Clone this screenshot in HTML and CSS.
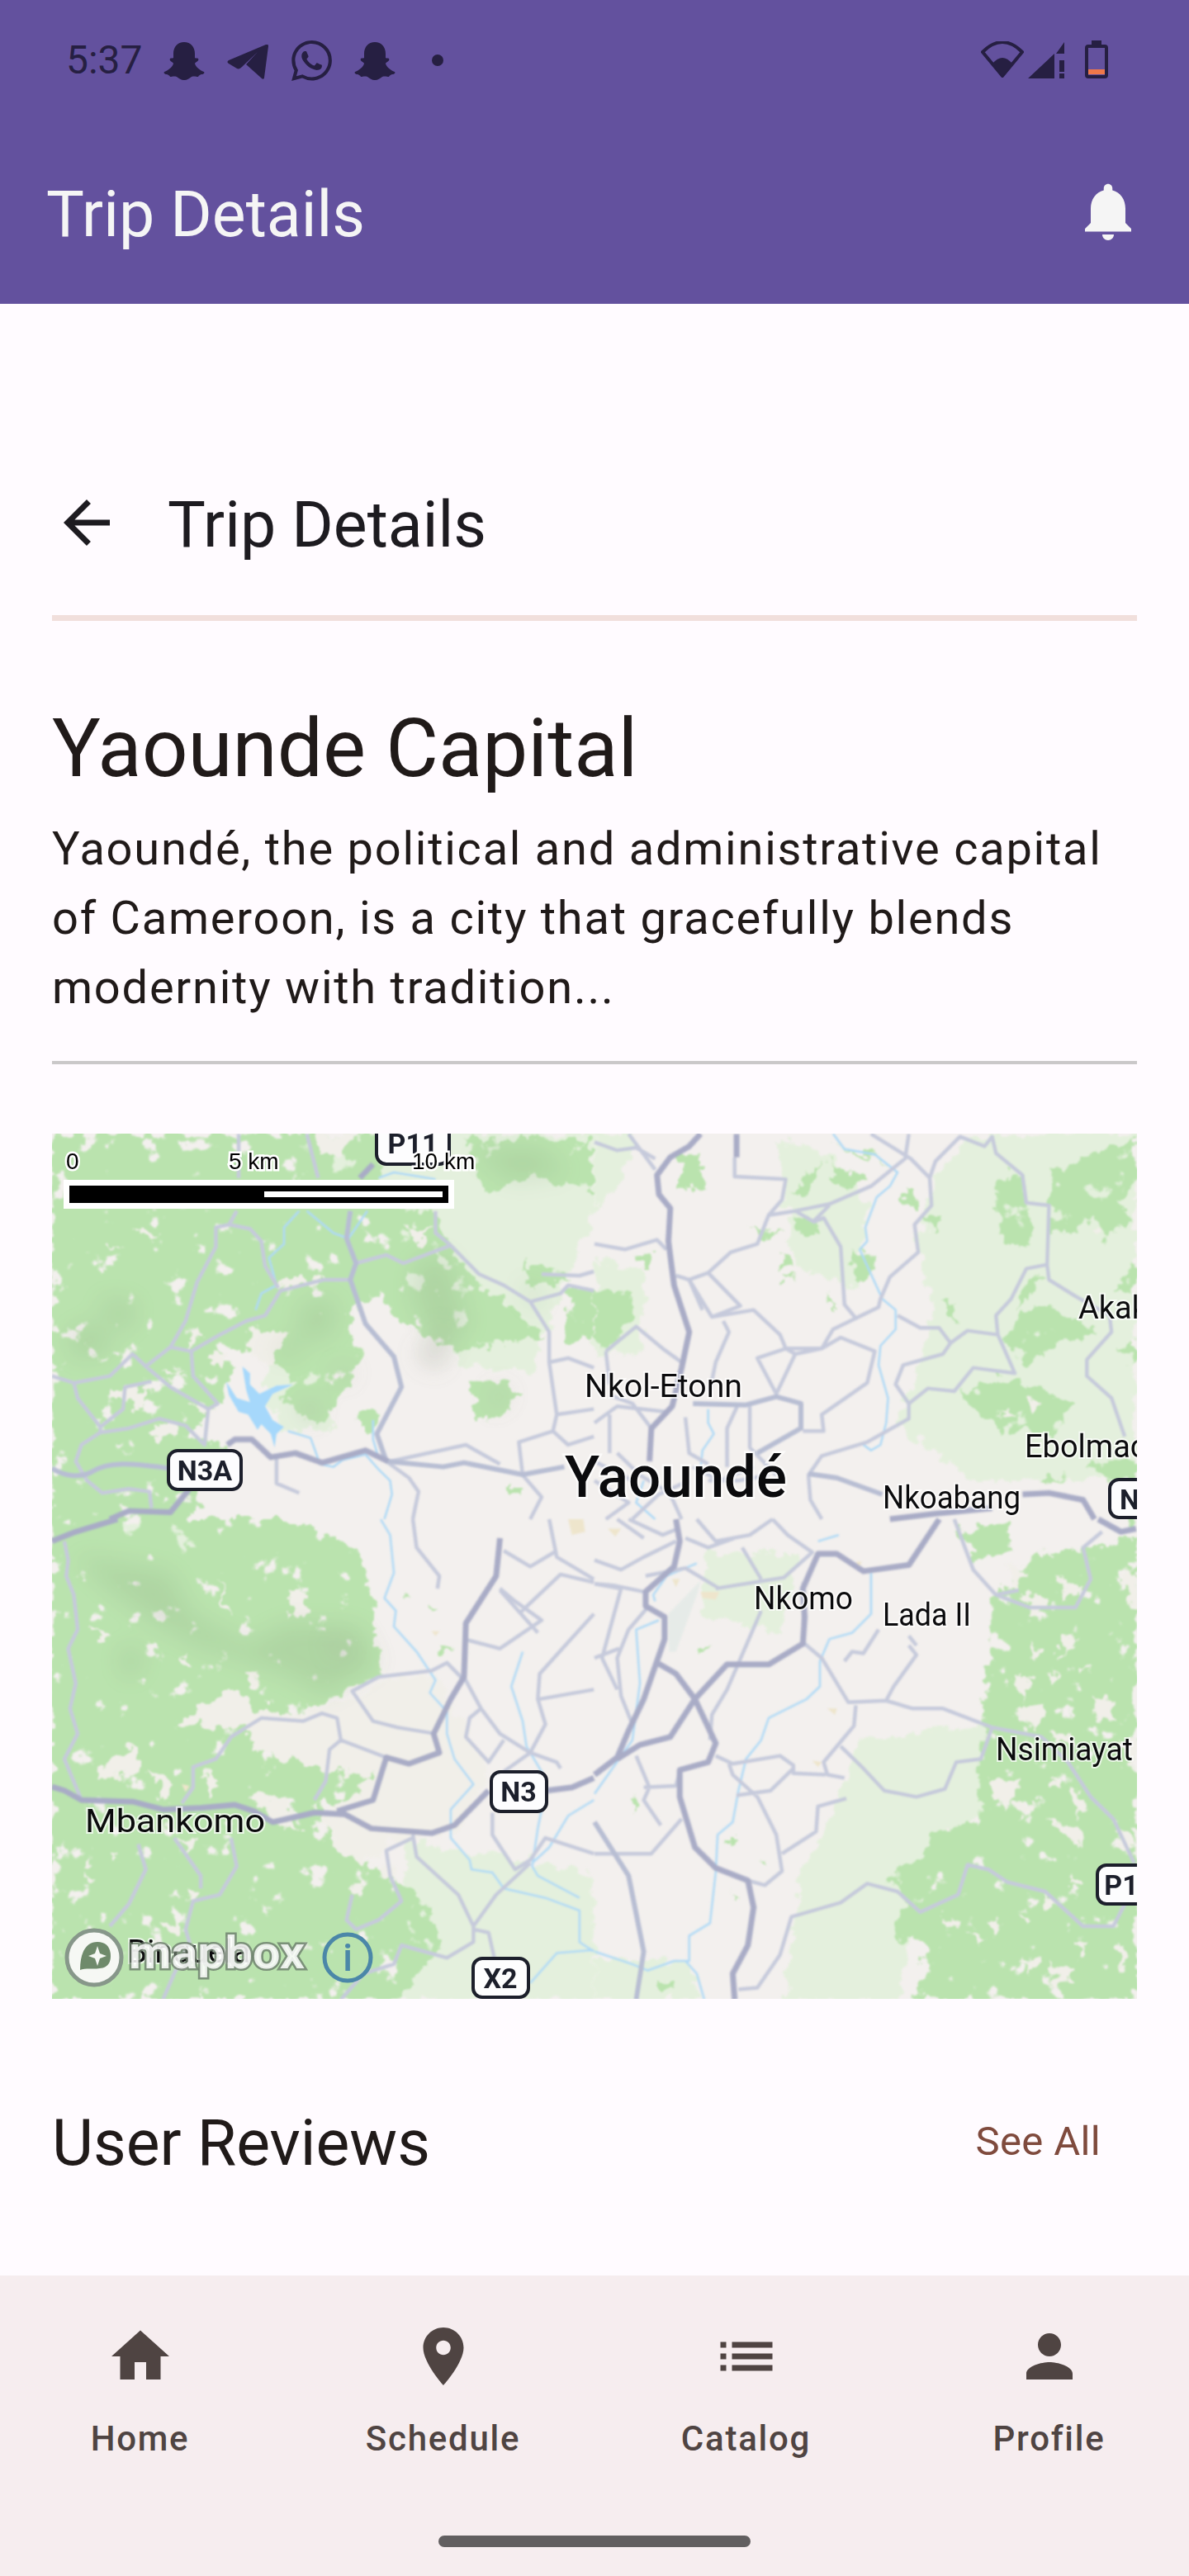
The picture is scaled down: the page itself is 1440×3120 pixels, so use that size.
FILE: index.html
```html
<!DOCTYPE html>
<html lang="en">
<head>
  <meta charset="UTF-8" />
  <meta name="viewport" content="width=device-width, initial-scale=1.0" />
  <title>Trip Details</title>
  <link rel="stylesheet" href="styles.css">
</head>
<body>
  <header class="appbar">
    <div class="statusbar">
      <span class="clock">5:37</span>
      <svg class="ico ghost" viewBox="0 0 50 46"><path d="M25 0c8 0 13 6 13 14v5c1 1 3 0 4 1s0 3-2 4c-1 1-2 1-2 2 1 4 6 8 11 10 1 1 0 3-3 3-2 1-3 1-4 3-2 0-5-1-8 0-3 2-5 4-9 4s-6-2-9-4c-3-1-6 0-8 0-1-2-2-2-4-3-3 0-4-2-3-3 5-2 10-6 11-10 0-1-1-1-2-2-2-1-3-3-2-4s3 0 4-1v-5C12 6 17 0 25 0z"/></svg>
      <svg class="ico plane" viewBox="0 0 50 42"><path d="M47 0c2-1 3 0 3 2l-5 38c0 2-2 2-3 1L23 24 37 9 18 27c-2 2-4 3-6 2L2 23c-2-1-2-3 0-4z"/></svg>
      <svg class="ico whatsapp" viewBox="0 0 24 24"><path d="M17.472 14.382c-.297-.149-1.758-.867-2.03-.967-.273-.099-.471-.148-.67.15-.197.297-.767.966-.94 1.164-.173.199-.347.223-.644.075-.297-.15-1.255-.463-2.39-1.475-.883-.788-1.48-1.761-1.653-2.059-.173-.297-.018-.458.13-.606.134-.133.298-.347.446-.52.149-.174.198-.298.298-.497.099-.198.05-.371-.025-.52-.075-.149-.669-1.612-.916-2.207-.242-.579-.487-.5-.669-.51-.173-.008-.371-.01-.57-.01-.198 0-.52.074-.792.372-.272.297-1.04 1.016-1.04 2.479 0 1.462 1.065 2.875 1.213 3.074.149.198 2.096 3.2 5.077 4.487.709.306 1.262.489 1.694.625.712.227 1.36.195 1.871.118.571-.085 1.758-.719 2.006-1.413.248-.694.248-1.289.173-1.413-.074-.124-.272-.198-.57-.347m-5.421 7.403h-.004a9.87 9.87 0 01-5.031-1.378l-.361-.214-3.741.982.998-3.648-.235-.374a9.86 9.86 0 01-1.51-5.26c.001-5.45 4.436-9.884 9.888-9.884 2.64 0 5.122 1.03 6.988 2.898a9.825 9.825 0 012.893 6.994c-.003 5.45-4.437 9.884-9.885 9.884m8.413-18.297A11.815 11.815 0 0012.05 0C5.495 0 .16 5.335.157 11.892c0 2.096.547 4.142 1.588 5.945L.057 24l6.305-1.654a11.882 11.882 0 005.683 1.448h.005c6.554 0 11.89-5.335 11.893-11.893a11.821 11.821 0 00-3.48-8.413z"/></svg>
      <svg class="ico ghost" viewBox="0 0 50 46"><path d="M25 0c8 0 13 6 13 14v5c1 1 3 0 4 1s0 3-2 4c-1 1-2 1-2 2 1 4 6 8 11 10 1 1 0 3-3 3-2 1-3 1-4 3-2 0-5-1-8 0-3 2-5 4-9 4s-6-2-9-4c-3-1-6 0-8 0-1-2-2-2-4-3-3 0-4-2-3-3 5-2 10-6 11-10 0-1-1-1-2-2-2-1-3-3-2-4s3 0 4-1v-5C12 6 17 0 25 0z"/></svg>
      <span class="dot"></span>
      <div class="sysicons">
        <svg class="ico wifi" viewBox="0 0 52 45"><path class="wifi-line" d="M2 13Q26-11 50 13L26 42Z"/><path d="M14 27Q26 13 38 27L26 43Z"/></svg>
        <svg class="ico signal" viewBox="0 0 45 44"><path d="M0 44H32V14ZM44 0V14H34ZM38 22H44V36H38ZM38 38H44V44H38Z"/></svg>
        <svg class="ico battery" viewBox="0 0 28 46"><path d="M8 0H20V5H8Z"/><rect class="batt-body" x="2" y="7" width="24" height="37" rx="2"/><rect class="batt-level" x="4" y="35" width="20" height="6"/></svg>
      </div>
    </div>
    <div class="appbar-row">
      <span class="appbar-title">Trip Details</span>
      <svg class="icon-84 bell" viewBox="0 0 24 24"><path d="M12 22c1.1 0 2-.9 2-2h-4c0 1.1.89 2 2 2zm6-6v-5c0-3.07-1.64-5.64-4.5-6.32V4c0-.83-.67-1.5-1.5-1.5s-1.5.67-1.5 1.5v.68C7.63 5.36 6 7.92 6 11v5l-2 2v1h16v-1l-2-2z"/></svg>
    </div>
  </header>

  <main class="content">
    <div class="page-head">
      <svg class="icon-84 back" viewBox="0 0 24 24"><path d="M20 11H7.83l5.59-5.59L12 4l-8 8 8 8 1.41-1.41L7.83 13H20v-2z"/></svg>
      <span class="page-title">Trip Details</span>
    </div>
    <div class="rule-pink"></div>
    <h1 class="place">Yaounde Capital</h1>
    <p class="blurb">Yaoundé, the political and administrative capital of Cameroon, is a city that gracefully blends modernity with tradition...</p>
    <div class="rule-grey"></div>

    <svg class="map" viewBox="63 1373 1314 1048" preserveAspectRatio="none">
      <defs>
        <filter id="rough" filterUnits="userSpaceOnUse" x="0" y="1340" width="1440" height="1120">
          <feTurbulence type="fractalNoise" baseFrequency="0.06" numOctaves="3" seed="7"/>
          <feDisplacementMap in="SourceGraphic" scale="26" xChannelSelector="R" yChannelSelector="G"/>
        </filter>
        <filter id="mottle" filterUnits="userSpaceOnUse" x="0" y="1340" width="1440" height="1120">
          <feTurbulence type="fractalNoise" baseFrequency="0.06" numOctaves="3" seed="7" result="warp"/>
          <feDisplacementMap in="SourceGraphic" in2="warp" scale="26" xChannelSelector="R" yChannelSelector="G" result="shape"/>
          <feTurbulence type="fractalNoise" baseFrequency="0.035" numOctaves="4" seed="21"/>
          <feColorMatrix values="0 0 0 0 0  0 0 0 0 0  0 0 0 0 0  14 0 0 0 -3.7"/>
          <feComposite in="shape" operator="in"/>
        </filter>
        <filter id="soft" filterUnits="userSpaceOnUse" x="0" y="1340" width="1440" height="1120">
          <feGaussianBlur stdDeviation="14"/>
        </filter>
        <filter id="ease" filterUnits="userSpaceOnUse" x="0" y="1340" width="1440" height="1120">
          <feGaussianBlur stdDeviation="0.8"/>
        </filter>
      </defs>

      <rect class="land" x="63" y="1373" width="1314" height="1048"/>

      <g filter="url(#ease)">
      <!-- pale vegetation -->
      <g class="wash" filter="url(#rough)">
        <path transform="translate(0 1360) scale(.4587 .3333)" d="M800 40L1568 40 1568 320 1400 900 1220 880 1090 640 1000 340 780 300ZM700 760L860 800 820 1100 700 1040ZM720 980L860 960 880 1120 740 1120Z"/>
        <path transform="translate(720 1360) scale(.4587 .3333)" d="M1000 40L1430 40 1430 1300 1000 1300 800 1100 900 700 850 450 900 200ZM480 60L640 130 720 300 700 600 530 520ZM0 40L120 40 60 240 0 300ZM0 500L130 540 130 820 0 860Z"/>
        <path transform="translate(0 1840) scale(.4587 .3822)" d="M180 100L300 20 520 10 630 140 510 180 490 110 300 60ZM1080 1020L1568 1120 1568 1523 1040 1523ZM137 550L170 550 165 800 137 820Z"/>
        <path transform="translate(720 1840) scale(.4587 .3822)" d="M500 1523L550 1100 600 1000 700 700 1050 650 1050 900 870 1100 800 1523ZM0 1523L0 1400 250 1400 280 1523ZM300 110L540 110 490 360 280 300Z"/>
      </g>

      <!-- forest, whole masses with clearings eaten out of them -->
      <g class="forest" filter="url(#mottle)">
        <path transform="translate(0 1360) scale(.4587 .3333)" d="M137 40L1000 40 1010 300 1140 320 1190 450 1260 600 1320 640 1450 780 1320 800 1230 830 1150 800 1030 700 1000 600 920 700 930 800 970 830 890 1020 830 1100 740 1000 780 930 660 820 560 850 620 880 580 1020 500 1130 600 1180 500 1440 137 1440ZM1230 60L1560 60 1568 250 1400 200 1280 250ZM1380 500L1520 560 1400 600ZM1490 600L1568 600 1568 800 1500 790Z"/>
        <path transform="translate(0 1840) scale(.4587 .3822)" d="M137 0L760 0 960 100 1010 490 800 610 900 800 990 760 1000 850 880 920 830 900 900 1020 1000 1120 1100 1180 1170 1340 1050 1523 137 1523Z"/>
        <path transform="translate(720 1840) scale(.4587 .3822)" d="M1430 60L1150 120 1050 250 1040 500 1010 830 1020 960 880 1000 870 1080 780 1130 820 1230 780 1320 860 1340 880 1400 840 1523 1430 1523Z"/>
        <path transform="translate(720 1360) scale(.4587 .3333)" d="M1060 250L1080 190 1130 190 1140 290 1165 400 1130 450 1080 420 1060 340ZM1210 170L1430 60 1430 230 1340 340 1200 420ZM1290 280L1350 260 1430 350 1350 420ZM1090 760L1140 680 1210 660 1320 770 1220 800 1140 890 1100 840ZM960 980L1100 920 1180 970 1280 1015 1210 1130 1080 1120 1020 1060ZM1430 500L1370 610 1430 620Z"/>
      </g>

      <!-- smaller solid patches -->
      <g class="forest" filter="url(#rough)">
        <path transform="translate(0 1360) scale(.4587 .3333)" d="M1240 950L1350 950 1370 1000 1290 1090 1250 1050ZM940 1060L990 1050 985 1130 960 1110ZM1340 1310L1380 1330 1350 1360Z"/>
        <path transform="translate(720 1360) scale(.4587 .3333)" d="M0 600L100 620 105 720 30 820 0 780ZM1380 810L1430 800 1430 880ZM640 70L780 150 700 120ZM520 260L600 140 560 260ZM620 140L720 200 680 240 640 230ZM220 120L270 110 300 230 230 240ZM400 380L490 400 460 430ZM520 340L600 370 600 410 540 400ZM490 480L520 510 490 530ZM495 550L525 575 500 570ZM680 460L740 480 720 570 690 580ZM910 640L960 680 950 720ZM620 620L640 680 620 660ZM115 480L155 480 150 530 125 530ZM815 250L860 280 850 305 820 280ZM1300 1250L1430 1220 1430 1290 1360 1300ZM870 340L920 350 900 390ZM1190 1280L1240 1290 1170 1310ZM1140 560L1190 560 1120 680Z"/>
        <path transform="translate(0 1840) scale(.4587 .3822)" d="M1060 240L1080 250 1070 260ZM1130 260L1150 270 1140 280ZM1150 410L1200 410 1170 430Z"/>
        <path transform="translate(720 1840) scale(.4587 .3822)" d="M960 40L1100 0 1090 100 1010 130ZM1380 0L1430 0 1430 30ZM160 1470L215 1460 210 1495 170 1495ZM350 1010L375 1010 355 1035ZM270 410L300 410 275 430ZM445 1080L455 1100 430 1100ZM370 1170L385 1190 375 1195ZM100 890L115 900 100 930Z"/>
      </g>

      <!-- clearings -->
      <g class="clearing" filter="url(#rough)">
        <path transform="translate(0 1360) scale(.4587 .3333)" d="M660 760L760 760 720 880 660 850ZM560 830L610 850 590 890 560 860ZM340 390L430 400 400 420ZM280 450L325 445 290 460ZM790 550L850 570 770 600 720 590ZM430 890L480 905 450 910ZM520 740L530 790 495 820ZM500 1020L580 1030 550 1060ZM290 960L390 970 370 1040 320 1010ZM410 1090L470 1100 460 1160 400 1130ZM1060 380L1140 400 1110 440ZM830 40L930 40 900 120 850 110Z"/>
        <path transform="translate(0 1840) scale(.4587 .3822)" d="M470 650L520 600 620 540 680 600 780 620 930 560 1050 500 1150 500 1300 800 1200 1000 1100 1010 1000 1040 960 1100 880 1040 900 1000 830 930 880 920 990 810 860 800 680 730 640 660ZM300 740L370 720 360 800 250 830ZM390 790L470 830 440 890ZM540 800L580 840 560 880ZM660 870L760 890 800 990 720 960ZM235 350L290 350 280 385ZM490 440L505 480 485 470ZM580 175L610 320 590 280ZM760 210L810 240 830 310 770 310ZM650 490L690 510 670 530ZM230 1060L240 1090 220 1090ZM230 1110L245 1140 230 1140ZM420 1280L480 1270 470 1320ZM500 1170L530 1190 500 1210ZM920 1140L970 1170 950 1200ZM1000 1100L1040 1110 1020 1150ZM480 1000L530 1020 500 1060ZM300 1060L320 1080 300 1090Z"/>
        <path transform="translate(720 1840) scale(.4587 .3822)" d="M1090 150L1150 170 1100 220ZM1220 190L1280 220 1250 260ZM1130 240L1190 260 1160 310ZM1150 400L1180 420 1160 440ZM1210 470L1230 510 1200 530ZM1290 460L1310 470 1290 480ZM1100 500L1160 490 1130 570ZM1320 560L1370 580 1380 640 1330 640ZM1130 580L1180 600 1170 660 1120 640ZM1200 690L1250 670 1280 720ZM1380 700L1430 700 1430 780ZM1040 830L1130 830 1080 920ZM1100 890L1160 900 1130 950ZM1210 820L1225 850 1210 860ZM1200 950L1270 970 1280 1040ZM1250 840L1300 880 1280 950ZM1370 960L1410 1000 1430 1050 1390 1040ZM930 970L945 1000 930 1000ZM920 1260L965 1260 960 1300 930 1290ZM1040 1280L1075 1270 1060 1330ZM990 1310L1030 1320 1020 1340ZM1120 1250L1150 1270 1130 1280ZM1190 1190L1215 1240 1180 1240ZM1260 1120L1285 1160 1270 1170ZM1380 1340L1420 1400 1390 1420ZM1200 1410L1270 1430 1260 1470 1220 1470ZM1400 160L1430 180 1430 280 1410 270ZM1240 360L1280 380 1230 440ZM1130 1380L1170 1390 1150 1440ZM1270 1340L1300 1350 1280 1380Z"/>
        <path transform="translate(720 1360) scale(.4587 .3333)" d="M1310 380L1345 400 1320 420ZM1140 1000L1180 1020 1150 1050ZM1060 1040L1110 1060 1080 1070Z"/>
      </g>

      <!-- town patches -->
      <path class="urban" transform="translate(720 1840) scale(.4587 .3822)" d="M35 30L70 30 55 55ZM280 230L330 230 320 255 285 250ZM615 600L640 600 635 620ZM575 765L600 770 590 785ZM205 190L225 190 215 215ZM690 135L705 135 700 150Z"/>
      <path class="urban" transform="translate(0 1840) scale(.4587 .3822)" d="M1500 0L1540 0 1545 40 1510 50ZM480 840L500 845 490 865ZM1140 355L1160 355 1150 370Z"/>
      <path class="strip" transform="translate(720 1840) scale(.4587 .3822)" d="M195 300L280 195 272 235 215 420 197 420Z"/>

      <!-- hillshade -->
      <g class="shade" filter="url(#soft)">
        <path transform="translate(0 1360) scale(.4587 .3333)" d="M180 760L260 720 300 820 200 860ZM260 640L360 650 340 760 290 730ZM1100 500L1180 480 1240 740 1160 800 1090 650ZM1250 100L1420 90 1500 180 1350 210ZM800 660L880 640 880 760 790 800ZM700 820L800 790 780 860ZM1130 780L1180 760 1190 840 1130 860ZM1380 560L1440 640 1400 680Z"/>
        <path transform="translate(0 1840) scale(.4587 .3822)" d="M200 120L450 170 500 300 650 400 760 330 950 340 1000 460 860 560 760 490 660 450 520 400 400 320 290 220ZM320 400L380 420 360 500 320 490Z"/>
      </g>
      <g class="greyhill" filter="url(#soft)">
        <path transform="translate(0 1360) scale(.4587 .3333)" d="M800 1000L850 1020 830 1090 790 1060ZM1110 800L1180 830 1160 900 1100 860ZM1300 950L1350 980 1300 1060ZM880 880L940 900 900 950ZM1150 720L1190 770 1160 810Z"/>
        <path transform="translate(0 1840) scale(.4587 .3822)" d="M860 370L930 410 880 440Z"/>
      </g>

      <!-- water -->
      <path class="lake" transform="translate(0 1360) scale(.4587 .3333)" d="M640 885L660 910 660 950 685 985 730 955 775 950 720 985 700 1030 720 1080 750 1105 730 1130 725 1180 715 1130 690 1095 680 1115 655 1060 630 1050 605 990 597 940 625 1000 660 1015 650 970Z"/>
      <g class="stream">
        <path transform="translate(0 1360) scale(.4587 .3333)" d="M790 320L750 380 750 440 710 490 730 590 690 620 675 680M810 320L880 400 920 420 970 320M1000 200L1040 180 1150 205M760 1120L820 1145 845 1240 880 1250 905 1225 965 1205 1000 1260 1030 1300 1035 1350 1015 1440M985 1080L985 1150 1000 1220"/>
        <path transform="translate(720 1360) scale(.4587 .3333)" d="M630 40L660 95 740 115 800 180 780 230 745 270 715 380 720 430 700 460 740 580 760 640 795 680 795 750 755 810 750 880 775 1000 770 1090 755 1170 730 1190 705 1165M300 1040L300 1090 315 1130 285 1190 280 1260M130 1300L110 1380 160 1440"/>
        <path transform="translate(0 1840) scale(.4587 .3822)" d="M1005 0L1030 50 1040 170 1015 250 1045 290 1040 340 1100 420 1150 510 1135 550 1180 610 1180 680 1200 760 1250 840 1190 920 1190 1010 1240 1080 1245 1110 1300 1120 1330 1170 1440 1200 1530 1240 1530 1340 1568 1370M1380 420L1350 530 1380 640 1390 720 1430 800 1440 860 1420 980 1405 1100 1420 1130 1530 1200M1568 890L1500 940 1450 1040 1405 1090M1568 1365L1470 1375 1400 1470"/>
        <path transform="translate(720 1840) scale(.4587 .3822)" d="M645 50L590 70M730 170L730 300 680 360 620 380 595 450 595 530 560 570 460 630 440 700 400 760 380 860 365 960 325 1000 320 1120 305 1280 250 1320 250 1400 210 1400 140 1430 100 1410 0 1370M240 1400L270 1440 290 1523M160 260L155 240 190 180 270 140M170 320L110 350 120 520 100 700 0 870"/>
      </g>

      <!-- minor roads -->
      <g class="road">
        <path transform="translate(0 1360) scale(.4587 .3333)" d="M940 510L1020 480 1065 510 1190 445 1265 550 1330 590 1400 650 1450 760 1450 870 1500 855 1568 890M920 570L855 570 740 610 700 700 650 720 580 770 505 830 450 815 385 885 350 840 290 920 195 945 137 920M625 320L605 370 570 380 570 450 520 580 490 720 450 815M605 370L660 385 690 430 700 520 735 600M505 830L510 920 575 1020 550 1040 450 960 385 885M195 945L205 1000 265 1105 325 1040 330 960 400 940M265 1105L265 1125 215 1170 200 1230 230 1300 270 1345 340 1330 395 1340 400 1400M265 1125L340 1110 420 1075 490 1100 540 1170 550 1040M1450 870L1470 1060 1460 1120 1370 1160 1380 1280 1430 1360 1400 1440M1470 1060L1568 1040M1460 1120L1500 1170 1568 1140M730 1215L730 1310 790 1345M1030 1230L1230 1170 1320 1240M1020 1230L1080 1290 1105 1340 1090 1440M1150 320L1150 400 1190 445M810 40L840 200M630 40L630 200M1430 550L1530 555 1568 540M1400 650L1480 620 1500 590 1568 610"/>
        <path transform="translate(720 1360) scale(.4587 .3333)" d="M370 125L370 195 505 205 495 280 460 335 530 320 620 295 730 230 820 130 830 40M460 335L430 440 360 470 300 545 250 570 215 555M0 440L80 460 165 425 190 460M300 545L385 665 310 705 250 570 285 680M310 705L420 680 490 770 505 820 430 855 480 985 530 840 505 820M530 320L580 360 605 345 650 450 660 660 690 710 750 670 755 640 780 560 855 470 845 370 890 300 885 200 835 130 730 40M620 300L580 355M505 820L600 820 650 780 740 830 720 945 600 1060 605 1120 550 1120M530 840L600 820 630 750 750 670M800 700L860 745 910 745 940 800 985 755 1065 770 1110 910 1000 890 950 975 880 965 830 1020 795 950 815 880 920 840 940 800M1065 770L1060 700 1100 640 1140 530 1195 515 1200 300 1140 290 1130 190 1060 110 1050 50 1030 85 965 50 900 140 885 200M1195 515L1200 570 1270 630 1360 700 1365 760 1300 860 1300 920 1365 1000 1400 1140M830 1020L830 1075 720 1160 600 1210 565 1280 570 1370 600 1440M150 1110L100 1020 40 990M240 1070L250 1200 300 1240M380 1020L350 1110 350 1250M410 1030L410 1180 480 1280M30 830L110 740 180 820 230 870M0 1090L60 1030 190 1050M40 1060L40 1200M30 830L40 950M340 720L355 760 320 870 305 970M0 70L60 100 110 90 160 130M90 40L160 170M260 1250L330 1300 420 1250M0 1300L90 1380 30 1440M60 1200L120 1280 205 1350M100 1440L170 1350 250 1300M300 1300L380 1300 460 1280M200 1350L230 1440M0 1230L100 1300"/>
        <path transform="translate(0 1840) scale(.4587 .3822)" d="M170 70L180 130 175 180 195 240 205 350 180 410 200 520 185 600 205 680 170 760 215 890M1090 0L1100 90 1160 180 1155 220M1150 680L1050 660 985 640 930 545 1000 500 1140 480 1180 455 1225 510M1020 755L900 700 870 730 860 830 830 890M900 700L890 630 850 615 800 640 690 630 610 690 570 760 510 785 510 850 480 900M1225 380L1320 410 1430 320 1360 260 1320 220M1225 500L1270 600 1240 630 1230 690 1290 770 1330 700M1270 600L1320 680 1400 740 1440 650 1420 570 1425 490 1500 390 1568 300M1400 740L1330 800M1425 570L1568 540M1400 740L1470 770 1480 790M1300 930L1300 1000 1360 1110 1400 1080 1440 1010 1568 1060M1090 1000L1100 1070 1210 1190 1250 1290 1250 1340 1180 1390 1060 1350 1040 1410 960 1440 900 1523M1090 1010L1020 1050 1030 1130 1060 1210 1000 1270 940 1300 915 1270 930 1190M1250 1290L1310 1190 1400 1090M1250 1300L1290 1310 1305 1390M610 1010L625 1100 580 1190 510 1210 490 1300 500 1340 460 1440 430 1523M460 1010L530 1130 530 1170M365 1030L385 1110 340 1220 290 1290M1370 300L1480 175 1568 200M1320 225L1420 360M1450 0L1470 120 1568 190M1330 100L1400 150 1470 100"/>
        <path transform="translate(720 1840) scale(.4587 .3822)" d="M550 390L600 440 670 580 770 575 840 600 920 600 1050 660 1180 690 1250 770 1310 880 1370 950 1425 1090M690 590L685 655 605 770 615 810 660 820M650 720L710 790 765 860 850 880 925 855 955 770 1020 760 1050 660M320 750L365 775 490 750 525 780 525 805 610 810M355 775L365 810 430 880 480 1000 495 1115 450 1160 405 1145M525 790L465 860 375 875M495 1060L585 990 590 910 665 885M0 1060L150 1060 230 950M130 850L215 845 225 800M110 750L145 850 130 890 175 970M320 220L500 185 575 105 510 50 470 0M135 180L240 155 330 220M0 205L70 220 20 440 60 540M390 90L440 190M440 290L350 540 310 620 305 700M0 440L65 410M380 1490L430 1485 490 1380 520 1260 650 1215 720 1155 800 1180 860 1245 960 1190 985 1095 1040 1110 1090 1150 1190 1180 1290 1290 1370 1290 1400 1220M950 0L1000 160 1060 240 1150 280 1270 280 1310 190 1290 90 1340 40M1060 240L1120 225M830 400L850 430 790 530 770 575M660 450L680 420 710 425 750 350M830 370L850 400M0 130L70 160 130 120 215 70M0 205L50 210 130 230M140 280L90 350 60 440 70 560 100 650M90 0L180 50 220 30M270 0L320 70 410 50 470 0M240 60L300 90 370 60M130 60L60 0"/>
      </g>

      <!-- main roads -->
      <g class="road road-mid">
        <path transform="translate(0 1360) scale(.4587 .3333)" d="M925 320L915 420 940 510 925 570 965 730 1040 850 1060 960 995 1130 1020 1230M137 1255C170 1285 210 1290 240 1270 290 1225 360 1240 445 1255M1025 1230L1170 1250 1225 1235 1380 1278 1490 1250"/>
        <path transform="translate(720 1360) scale(.4587 .3333)" d="M260 1020L400 1025 480 995 545 1020 545 1110 430 1200M565 1275L640 1290 760 1350"/>
        <path transform="translate(720 1840) scale(.4587 .3822)" d="M0 960L90 1130 130 1370 110 1523"/>
      </g>
      <g class="road road-main">
        <path transform="translate(0 1360) scale(.4587 .3333)" d="M600 1170L620 1150 665 1150 715 1215 780 1200 850 1235 965 1190 1025 1230M500 1330L450 1415 340 1410 290 1440M950 200L985 150"/>
        <path transform="translate(720 1360) scale(.4587 .3333)" d="M280 40L250 85 200 125 165 190 170 260 200 310 195 430 210 590 250 760 230 890 205 1030 150 1110 145 1230M375 40L375 125M1130 1350L1200 1345 1290 1370 1320 1440M780 1440L900 1420 1050 1400"/>
        <path transform="translate(0 1840) scale(.4587 .3822)" d="M137 70L200 40 310 0M137 848L170 860 215 890 350 895 430 920 530 915 620 905 670 925 720 960 830 930 910 935 980 980 1140 995 1200 970 1290 860M1445 860L1510 850 1568 820M1320 60L1310 180 1230 330 1225 500 1190 570 1145 680 1160 740 1080 775 1020 755 985 890 890 925"/>
        <path transform="translate(720 1840) scale(.4587 .3822)" d="M215 0L225 70 210 150 135 230 135 275 185 310 185 380 130 570 90 670 60 755 0 810M60 760L120 715 200 690 265 570 350 460 460 460 550 395 555 310 550 220 590 110 640 110 710 165 830 145 910 0M165 455L215 490 265 570 320 710 300 770 225 795 225 880 265 1040 320 1105 405 1145 420 1230 405 1350 365 1440 370 1523M1330 0L1390 40 1430 30"/>
      </g>
      </g>

      <!-- road shields -->
      <g class="shield">
        <rect x="456" y="1350" width="88" height="60" rx="12"/>
        <rect x="204" y="1757" width="88" height="47" rx="11"/>
        <rect x="595" y="2146" width="67" height="48" rx="11"/>
        <rect x="573" y="2372" width="67" height="47" rx="11"/>
        <rect x="1344" y="1792" width="80" height="46" rx="11"/>
        <rect x="1329" y="2259" width="80" height="47" rx="11"/>
      </g>
      <g class="shield-text">
        <text x="500" y="1397">P11</text>
        <text x="248" y="1793">N3A</text>
        <text x="628" y="2182">N3</text>
        <text x="606" y="2408">X2</text>
        <text x="1368" y="1828">N</text>
        <text x="1358" y="2295">P1</text>
      </g>

      <!-- place labels -->
      <g class="label">
        <text x="708" y="1692" textLength="191" lengthAdjust="spacingAndGlyphs">Nkol-Etonn</text>
        <text x="1069" y="1827" textLength="167" lengthAdjust="spacingAndGlyphs">Nkoabang</text>
        <text x="1241" y="1765">Ebolmac</text>
        <text x="1306" y="1597">Akak</text>
        <text x="913" y="1949" textLength="120" lengthAdjust="spacingAndGlyphs">Nkomo</text>
        <text x="1069" y="1969" textLength="107" lengthAdjust="spacingAndGlyphs">Lada II</text>
        <text x="1206" y="2132" textLength="166" lengthAdjust="spacingAndGlyphs">Nsimiayat</text>
        <text x="103" y="2219" textLength="218" lengthAdjust="spacingAndGlyphs">Mbankomo</text>
        <text x="154" y="2377" textLength="149" lengthAdjust="spacingAndGlyphs">Binguela</text>
        <text class="capital" x="684" y="1813" textLength="269" lengthAdjust="spacingAndGlyphs">Yaoundé</text>
      </g>

      <!-- scale bar -->
      <rect class="scale-back" x="77" y="1429" width="473" height="35"/>
      <rect class="scale-ink" x="84" y="1436" width="459" height="21"/>
      <rect class="scale-back" x="320" y="1443" width="216" height="7"/>
      <g class="scale-text">
        <text x="80" y="1416">0</text>
        <text x="277" y="1416">5 km</text>
        <text x="499" y="1416">10 km</text>
      </g>

      <!-- attribution -->
      <circle class="mb-ring" cx="114" cy="2371" r="33"/>
      <path class="mb-leaf" d="M134 2369C134 2358 128 2352 118 2352 106 2352 97 2362 97 2386 108 2381 134 2392 134 2369Z"/>
      <path class="mb-star" d="M118 2357L121 2366 129 2369 121 2372 118 2381 115 2372 107 2369 115 2366Z"/>
      <text class="mb-word" x="156" y="2384" textLength="213" lengthAdjust="spacingAndGlyphs">mapbox</text>
      <circle class="mb-info" cx="421" cy="2371" r="28"/>
      <text class="mb-i" x="421" y="2387">i</text>
    </svg>

    <div class="reviews-head">
      <h2 class="reviews-title">User Reviews</h2>
      <a class="see-all">See All</a>
    </div>
  </main>

  <nav class="tabbar">
    <div class="tab">
      <svg class="icon-84" viewBox="0 0 24 24"><path d="M10 20v-6h4v6h5v-8h3L12 3 2 12h3v8z"/></svg>
      <span>Home</span>
    </div>
    <div class="tab">
      <svg class="icon-84" viewBox="0 0 24 24"><path d="M12 2C8.13 2 5 5.13 5 9c0 5.25 7 13 7 13s7-7.75 7-13c0-3.87-3.13-7-7-7zm0 9.5c-1.38 0-2.5-1.12-2.5-2.5s1.12-2.5 2.5-2.5 2.5 1.12 2.5 2.5-1.12 2.5-2.5 2.5z"/></svg>
      <span>Schedule</span>
    </div>
    <div class="tab">
      <svg class="icon-84" viewBox="0 0 24 24"><path d="M3 13h2v-2H3v2zm0 4h2v-2H3v2zm0-8h2V7H3v2zm4 4h14v-2H7v2zm0 4h14v-2H7v2zM7 7v2h14V7H7z"/></svg>
      <span>Catalog</span>
    </div>
    <div class="tab">
      <svg class="icon-84" viewBox="0 0 24 24"><path d="M12 12c2.21 0 4-1.79 4-4s-1.79-4-4-4-4 1.79-4 4 1.79 4 4 4zm0 2c-2.67 0-8 1.34-8 4v2h16v-2c0-2.66-5.33-4-8-4z"/></svg>
      <span>Profile</span>
    </div>
    <div class="home-pill"></div>
  </nav>
</body>
</html>
```

FILE: styles.css
```css
* {
  box-sizing: border-box;
}
body {
  margin: 0;
  width: 1440px;
  height: 3120px;
  overflow: hidden;
  display: flex;
  flex-direction: column;
  background-color: #fffbff;
  font-family: Roboto, sans-serif;
  color: #201a19;
}
svg {
  display: block;
  flex: none;
}
.appbar {
  height: 368px;
  background-color: #63519e;
  flex: none;
}
.statusbar {
  height: 147px;
  padding: 49px 98px 0 80px;
  display: flex;
  align-items: flex-start;
  color: #261f42;
}
.clock {
  font-size: 48px;
  line-height: 48px;
  width: 118px;
}
.ico {
  fill: #261f42;
}
.ghost {
  width: 50px;
  height: 46px;
  margin-top: 2px;
}
.plane {
  width: 50px;
  height: 42px;
  margin: 5px 0 0 27px;
}
.whatsapp {
  width: 49px;
  height: 49px;
  margin: 0 27px 0 28px;
}
.dot {
  width: 14px;
  height: 14px;
  margin: 17px 0 0 44px;
  border-radius: 50%;
  background-color: #261f42;
}
.sysicons {
  margin-left: auto;
  display: flex;
}
.wifi {
  width: 52px;
  height: 45px;
  margin-top: 1px;
}
.wifi-line {
  fill: none;
  stroke: #261f42;
  stroke-width: 4;
  stroke-linejoin: round;
}
.signal {
  width: 45px;
  height: 44px;
  margin: 2px 0 0 5px;
}
.battery {
  width: 28px;
  height: 46px;
  margin-left: 24px;
}
.batt-body {
  fill: none;
  stroke: #261f42;
  stroke-width: 4;
}
.batt-level {
  fill: #f0784a;
}
.appbar-row {
  padding: 0 56px;
  display: flex;
  align-items: flex-start;
  justify-content: space-between;
}
.appbar-title {
  margin-top: 68px;
  font-size: 77px;
  line-height: 90px;
  color: #f5f5f5;
}
.icon-84 {
  width: 84px;
  height: 84px;
  fill: currentColor;
}
.bell {
  margin-top: 67px;
  color: #f5f5f5;
}
.content {
  flex: 1;
  padding: 223px 63px 0;
}
.page-head {
  display: flex;
  align-items: center;
  gap: 56px;
  height: 84px;
}
.back {
  color: #1d1b20;
}
.page-title {
  padding-top: 6px;
  font-size: 77px;
  line-height: 90px;
  color: #1d1b20;
}
.rule-pink {
  height: 7px;
  margin-top: 70px;
  background-color: #f1dfdc;
}
.place {
  margin: 95px 0 0;
  font-size: 98px;
  line-height: 120px;
  font-weight: 400;
}
.blurb {
  margin: 19px 0 0;
  font-size: 56px;
  line-height: 84px;
  letter-spacing: 1.75px;
}
.rule-grey {
  height: 4px;
  margin-top: 47px;
  background-color: #cac8c9;
}
.map {
  width: 1314px;
  height: 1048px;
  margin-top: 84px;
}
.land {
  fill: #f3f0ee;
}
.wash {
  fill: #e4f0dd;
}
.forest {
  fill: #bae3ae;
}
.clearing {
  fill: #f1efe9;
}
.urban {
  fill: #eee5cc;
}
.strip {
  fill: #e6ebe8;
}
.shade {
  fill: #7d9a72;
  opacity: 0.18;
}
.greyhill {
  fill: #a8a8a0;
  opacity: 0.3;
}
.lake {
  fill: #a6d8fb;
}
.stream path,
.road path {
  fill: none;
  stroke-linejoin: round;
  vector-effect: non-scaling-stroke;
}
.stream path {
  stroke: #aed9f6;
  stroke-width: 2.5px;
}
.road path {
  stroke: #c6cadb;
  stroke-width: 4.5px;
}
.road-mid path {
  stroke: #b8bed3;
  stroke-width: 6px;
}
.road-main path {
  stroke: #a9acc6;
  stroke-width: 7px;
}
.shield rect {
  fill: #fdfdfe;
  stroke: #1c1f2b;
  stroke-width: 4px;
}
.shield-text text {
  font-family: Roboto, sans-serif;
  font-size: 34px;
  font-weight: 700;
  fill: #1c1f2b;
  text-anchor: middle;
}
.label text {
  font-family: Roboto, sans-serif;
  font-size: 38px;
  fill: #0b0b0d;
  paint-order: stroke;
  stroke: #ffffff;
  stroke-opacity: 0.7;
  stroke-width: 4px;
}
.label .capital {
  font-size: 70px;
  font-weight: 500;
  stroke-width: 5px;
}
.scale-back {
  fill: #ffffff;
}
.scale-ink {
  fill: #000000;
}
.scale-text text {
  font-family: "Liberation Sans", sans-serif;
  font-size: 28px;
  fill: #000000;
  paint-order: stroke;
  stroke: #ffffff;
  stroke-width: 5px;
}
.mb-ring {
  fill: #f6f8f4;
  stroke: #87978a;
  stroke-width: 5px;
}
.mb-leaf {
  fill: #6f8a6b;
}
.mb-star {
  fill: #f6f8f4;
}
.mb-word {
  font-family: Roboto, sans-serif;
  font-size: 56px;
  font-weight: 700;
  fill: #ffffff;
  fill-opacity: 0.85;
  paint-order: stroke;
  stroke: #6c7c6c;
  stroke-opacity: 0.8;
  stroke-width: 5px;
}
.mb-info {
  fill: none;
  stroke: #4b87a8;
  stroke-width: 5px;
}
.mb-i {
  font-family: Roboto, sans-serif;
  font-size: 46px;
  font-weight: 500;
  fill: #4b87a8;
  text-anchor: middle;
}
.reviews-head {
  display: flex;
  align-items: flex-start;
  justify-content: space-between;
  margin-top: 130px;
  padding-right: 44px;
}
.reviews-title {
  margin: 0;
  font-size: 77px;
  line-height: 90px;
  font-weight: 400;
}
.see-all {
  margin-top: 13px;
  font-size: 49px;
  line-height: 60px;
  letter-spacing: 0.35px;
  color: #7f4a3d;
}
.tabbar {
  position: relative;
  height: 364px;
  flex: none;
  padding-top: 56px;
  display: grid;
  grid-template-columns: repeat(4, 1fr);
  column-gap: 28px;
  align-items: start;
  background-color: #f6edef;
  color: #4f4442;
}
.tab {
  display: flex;
  flex-direction: column;
  align-items: center;
  gap: 30px;
  font-size: 42px;
  line-height: 56px;
  font-weight: 500;
  letter-spacing: 1.75px;
}
.home-pill {
  position: absolute;
  left: 531px;
  bottom: 35px;
  width: 378px;
  height: 14px;
  border-radius: 7px;
  background-color: #625f60;
}
```
